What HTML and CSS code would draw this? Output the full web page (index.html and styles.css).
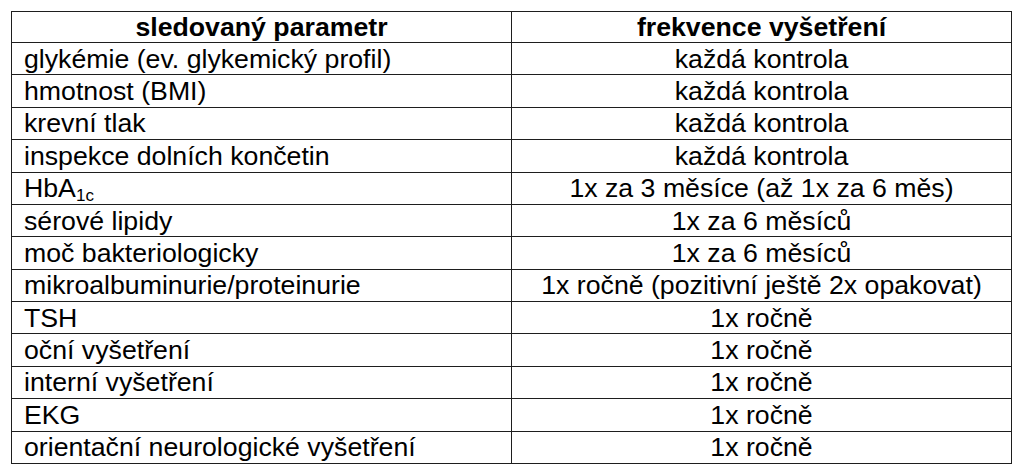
FILE: index.html
```html
<!DOCTYPE html>
<html lang="cs">
<head>
<meta charset="utf-8">
<title>Sledované parametry</title>
<link rel="stylesheet" href="styles.css">
</head>
<body>
<table class="grid">
  <thead>
    <tr><th>sledovaný parametr</th><th>frekvence vyšetření</th></tr>
  </thead>
  <tbody>
    <tr><td class="param">glykémie (ev. glykemický profil)</td><td class="freq">každá kontrola</td></tr>
    <tr><td class="param">hmotnost (BMI)</td><td class="freq">každá kontrola</td></tr>
    <tr><td class="param">krevní tlak</td><td class="freq">každá kontrola</td></tr>
    <tr><td class="param">inspekce dolních končetin</td><td class="freq">každá kontrola</td></tr>
    <tr><td class="param">HbA<sub class="sub">1c</sub></td><td class="freq">1x za 3 měsíce (až 1x za 6 měs)</td></tr>
    <tr><td class="param">sérové lipidy</td><td class="freq">1x za 6 měsíců</td></tr>
    <tr><td class="param">moč bakteriologicky</td><td class="freq">1x za 6 měsíců</td></tr>
    <tr><td class="param">mikroalbuminurie/proteinurie</td><td class="freq">1x ročně (pozitivní ještě 2x opakovat)</td></tr>
    <tr><td class="param">TSH</td><td class="freq">1x ročně</td></tr>
    <tr><td class="param">oční vyšetření</td><td class="freq">1x ročně</td></tr>
    <tr><td class="param">interní vyšetření</td><td class="freq">1x ročně</td></tr>
    <tr><td class="param">EKG</td><td class="freq">1x ročně</td></tr>
    <tr><td class="param">orientační neurologické vyšetření</td><td class="freq">1x ročně</td></tr>
  </tbody>
</table>
</body>
</html>
```
FILE: styles.css
```css
html, body {
  margin: 0;
  padding: 0;
  background: #fff;
}
body {
  padding: 11px 0 0 11px;
  font-family: "Liberation Sans", Arial, sans-serif;
  color: #000;
}
.grid {
  border-collapse: collapse;
  width: 1001px;
  height: 453px;
  table-layout: fixed;
  font-size: 26.7px;
  line-height: 30px;
}
.grid th,
.grid td {
  border: 1.5px solid #1e1e1e;
  padding: 0 12px;
  white-space: nowrap;
  vertical-align: middle;
}
.grid th {
  font-weight: bold;
  text-align: center;
}
.param {
  text-align: left;
}
.freq {
  text-align: center;
}
.sub {
  font-size: 17px;
  vertical-align: -4px;
  line-height: 0;
}
```
